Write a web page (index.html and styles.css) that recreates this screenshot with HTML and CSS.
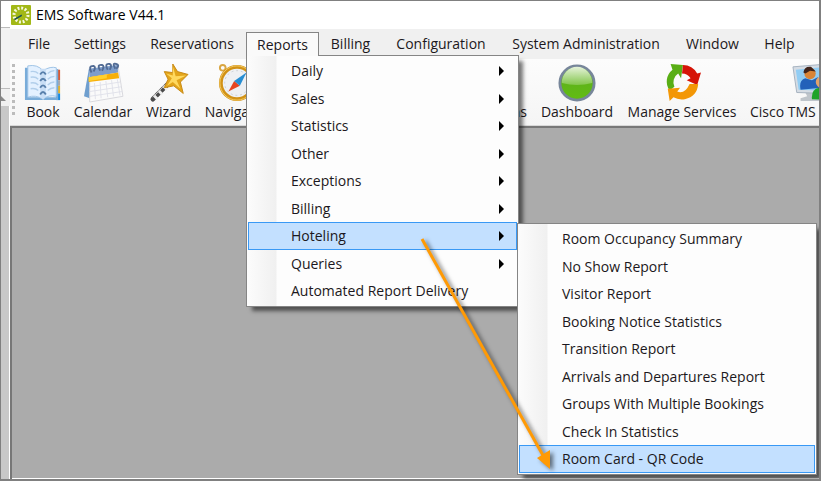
FILE: index.html
```html
<!DOCTYPE html>
<html lang="en">
<head>
<meta charset="utf-8">
<title>EMS Software V44.1</title>
<link rel="stylesheet" href="styles.css">
</head>
<body>
<div class="frame">
  <div class="behind" aria-hidden="true">
    <div class="behind-title"></div>
    <div class="behind-panel"></div>
    <div class="behind-button"><svg width="5" height="6"><path d="M0 0L5 5H0Z" fill="#888"/></svg></div>
    <div class="behind-track"></div>
  </div>
  <main class="app">
    <header class="titlebar">
      <svg class="logo" viewBox="0 0 20 20" aria-hidden="true">
        <rect width="20" height="20" rx="1" fill="#a2b817"/>
        <circle cx="10" cy="10" r="7" fill="none" stroke="#f7f9df" stroke-width="3" stroke-dasharray="1.9 1.765"/>
        <path d="M3 14L10.500 9.500L11 11L4 15Z" fill="#174d5d"/>
      </svg>
      <h1 class="title">EMS Software V44.1</h1>
    </header>
    <nav class="menubar">
      <div class="menu"><button class="menu-button">File</button></div>
      <div class="menu"><button class="menu-button">Settings</button></div>
      <div class="menu"><button class="menu-button">Reservations</button></div>
      <div class="menu menu-open">
        <button class="menu-button">Reports</button>
        <div class="dropdown">
          <button class="item has-sub">Daily</button>
          <button class="item has-sub">Sales</button>
          <button class="item has-sub">Statistics</button>
          <button class="item has-sub">Other</button>
          <button class="item has-sub">Exceptions</button>
          <button class="item has-sub">Billing</button>
          <button class="item has-sub selected">Hoteling</button>
          <button class="item has-sub">Queries</button>
          <button class="item">Automated Report Delivery</button>
          <div class="dropdown submenu">
            <button class="item">Room Occupancy Summary</button>
            <button class="item">No Show Report</button>
            <button class="item">Visitor Report</button>
            <button class="item">Booking Notice Statistics</button>
            <button class="item">Transition Report</button>
            <button class="item">Arrivals and Departures Report</button>
            <button class="item">Groups With Multiple Bookings</button>
            <button class="item">Check In Statistics</button>
            <button class="item selected">Room Card - QR Code</button>
          </div>
        </div>
      </div>
      <div class="menu"><button class="menu-button">Billing</button></div>
      <div class="menu"><button class="menu-button">Configuration</button></div>
      <div class="menu"><button class="menu-button">System Administration</button></div>
      <div class="menu"><button class="menu-button">Window</button></div>
      <div class="menu"><button class="menu-button">Help</button></div>
    </nav>
    <div class="toolbar">
      <span class="grip" aria-hidden="true"></span>
      <button class="tool">
        <svg class="tool-icon" viewBox="0 0 40 40" aria-hidden="true">
          <path d="M34 6h4v11h-4z" fill="#d85b35"/><path d="M34 17h4v6h-4z" fill="#a8a9ad"/><path d="M34 23h4v8h-4z" fill="#e7b329"/><path d="M34 31h4v7h-4z" fill="#1689df"/>
          <path d="M1 4h4v31h14l1 3H1zM20 38l2-3h12V6l2-1v33z" fill="#79acd9"/>
          <path d="M4 2Q14 0 20 7Q28 2 34 4V34Q26 32 20 37Q12 32 4 35Z" fill="#e4f1ff" stroke="#9bc1e5"/>
          <path d="M17 5h6v30l-3 2-3-2z" fill="#c9def5"/>
          <path d="M7 8q5-1 8 2M7 14q5-1 8 2M7 20q5-1 8 2M7 26q5-1 8 2M25 10q3-3 7-3M25 16q3-3 7-3M25 22q3-3 7-3M25 28q3-3 7-3" fill="none" stroke="#b2cfeb" stroke-width="1.500"/>
          <path d="M17 11q3-5 6 0M17 18q3-5 6 0M17 25q3-5 6 0M17 32q3-5 6 0" fill="none" stroke="#587fab" stroke-width="2"/>
        </svg>
        Book
      </button>
      <button class="tool">
        <svg class="tool-icon" viewBox="0 0 40 40" aria-hidden="true">
          <path d="M5 6L0 34L6 36L12 12Z" fill="#6f9fcf"/>
          <path d="M6 7L36 3L41 34L6 40Z" fill="#fafafa" stroke="#d7d7dc"/>
          <path d="M5 5L35 1L36 9L6 14Z" fill="#7d9dca"/>
          <path d="M5 14L36 9L37 15L5 19Z" fill="#f7af08"/><path d="M5 14L24 11L24 15L5 18Z" fill="#ffd12e"/>
          <path d="M11 20L12 37M17 19L18 36M23 18L25 35M29 17L31 34M35 16L38 33M6 24L38 19M6 29L39 24M6 34L40 29" stroke="#e0e2ea"/>
          <path d="M8 9Q4 2 10 2Q13 3 10 8M17 7Q13 0 19 1Q22 2 19 7M25 6Q21-1 27 0Q30 1 27 6M33 5Q29-2 34 0Q38 1 34 5" fill="none" stroke="#516b94" stroke-width="2"/>
        </svg>
        Calendar
      </button>
      <button class="tool">
        <svg class="tool-icon" viewBox="0 0 40 40" aria-hidden="true">
          <path d="M3 37L23 17" stroke="#4a4a4a" stroke-width="5" stroke-linecap="round"/>
          <path d="M4 33L8 37M9 28L13 32M14 23L18 27M18 19L22 23" stroke="#eee" stroke-width="3"/>
          <path d="M3 35L21 17" stroke="#ccc" stroke-width="1"/>
          <path d="M24 0L29 8L40 11L32 19L35 31L25 23L15 25L19 16L15 8L24 9Z" fill="#e3a51b" stroke="#c68711"/>
          <path d="M24 2L27 13L38 12L28 17L32 26L24 19L18 23L23 15L17 10L24 12Z" fill="#ffd95f"/>
        </svg>
        Wizard
      </button>
      <button class="tool">
        <svg class="tool-icon" viewBox="0 0 40 40" aria-hidden="true">
          <circle cx="5" cy="4" r="3" fill="none" stroke="#d9a642" stroke-width="2"/>
          <circle cx="20" cy="20" r="17" fill="#eef0f3" stroke="#d29216" stroke-width="4"/>
          <circle cx="20" cy="20" r="18" fill="none" stroke="#f4cc66"/>
          <circle cx="20" cy="20" r="13" fill="none" stroke="#c8cdd3" stroke-dasharray="2 3"/>
          <path d="M11 29L17 18L23 23Z" fill="#e64521"/><path d="M17 18L30 9L23 23Z" fill="#278ed3"/>
        </svg>
        Navigator
      </button>
      <button class="tool tool-right">Reservations</button>
      <button class="tool">
        <svg class="tool-icon" viewBox="0 0 40 40" aria-hidden="true">
          <defs><linearGradient id="ball" x2="0" y2="1"><stop stop-color="#5cab21"/><stop offset="1" stop-color="#62bd12"/></linearGradient><linearGradient id="shine" x2="0" y2="1"><stop stop-color="#e5f2d9"/><stop offset="1" stop-color="#83c64c"/></linearGradient></defs>
          <circle cx="20" cy="20" r="18" fill="url(#ball)" stroke="#77869a" stroke-width="3"/>
          <path d="M4 20A16 17 0 0 1 36 20Q20 24 4 20Z" fill="url(#shine)"/>
        </svg>
        Dashboard
      </button>
      <button class="tool">
        <svg class="tool-icon" viewBox="0 0 40 40" aria-hidden="true">
          <path d="M7 28A16 16 0 0 1 10 6L8 0L21 1L19 15L16 10A11 11 0 0 0 12 24Z" fill="#59ae15"/>
          <path d="M21 1Q31 1 36 10L40 9L36 22L25 17L29 15Q26 10 20 10Z" fill="#d51407"/>
          <path d="M37 21Q36 34 23 37Q16 38 11 35L7 39L5 26L18 25L15 29Q23 32 28 21Z" fill="#f39706"/>
        </svg>
        Manage Services
      </button>
      <button class="tool tool-last">
        <svg class="tool-icon" viewBox="0 0 40 40" aria-hidden="true">
          <path d="M14 30L26 30L29 35L34 39H9V36L16 34Z" fill="#bfc5cb"/>
          <path d="M1 3L37 0V31L5 30Z" fill="#d5dce4" stroke="#a4b1bf"/><path d="M4 6L35 3V28L7 27Z" fill="#91cdf4"/>
          <path d="M9 27Q7 17 14 15L21 17L27 14Q30 18 30 25Z" fill="#2361b9"/><circle cx="19" cy="10" r="6" fill="#d98537"/><path d="M12 9Q13 2 20 3L25 8L19 7L14 10Z" fill="#40241a"/>
          <circle cx="31" cy="19" r="6" fill="#e2a36c"/><path d="M21 37Q20 26 29 25Q39 24 40 38Z" fill="#20a329"/>
        </svg>
        Cisco TMS
      </button>
    </div>
    <section class="workspace"></section>
  </main>
  <svg class="pointer" width="150" height="250" viewBox="0 0 150 250" aria-hidden="true">
    <path d="M7 9L130 229" stroke="#ff9a05" stroke-width="3"/>
    <path d="M135 239L122 228L135 220Z" fill="#ff9a05"/>
  </svg>
</div>
</body>
</html>
```
FILE: styles.css
```css
* { box-sizing: border-box; }

body {
  margin: 0;
  background: #fff;
  color: #1c1820;
  font: 14px/20px "Open Sans", "Noto Sans", sans-serif;
}

button {
  border: 0;
  padding: 0;
  background: none;
  color: inherit;
  font: inherit;
  white-space: nowrap;
}

.frame {
  position: relative;
  display: flex;
  min-height: 100vh;
  margin-right: 9px;
  overflow: hidden;
  border: solid #808080;
  border-width: 1px 2px 2px 1px;
}

.behind {
  display: flex;
  flex: none;
  flex-direction: column;
  width: 9px;
}

.behind-title { height: 26px; }
.behind-panel { height: 62px; border: solid #bbb; border-width: 1px 0; background: #f3f3f3; }
.behind-button { height: 17px; padding-top: 7px; background: #f0f0f0; line-height: 0; }
.behind-track { flex: 1; border-right: 1px solid #fff; background: #c8c8c8; }

.app {
  display: flex;
  flex: 1;
  flex-direction: column;
  min-width: 0;
}

.titlebar {
  display: flex;
  align-items: center;
  gap: 5px;
  height: 28px;
  padding-left: 1px;
}

.logo { width: 20px; height: 20px; }
.title { margin: 0; color: #000; font-size: 14px; font-weight: 400; }

.menubar {
  display: grid;
  grid-template-columns: 46px 76px 108px 73px 63px 118px 172px 81px 53px;
  height: 30px;
  padding: 3px 0 0 6px;
  background: #f0f0f0;
}

.menu { position: relative; }
.menu-button { width: 100%; height: 24px; }

.menu-open .menu-button {
  position: relative;
  z-index: 3;
  border: 1px solid #858585;
  border-bottom: 0;
  background: #fafafa;
}

.dropdown {
  position: absolute;
  z-index: 2;
  top: 23px;
  left: 0;
  display: flex;
  flex-direction: column;
  width: 273px;
  padding: 1px;
  border: 1px solid #858585;
  background: linear-gradient(90deg, #fcfcfc 0, #f0f0f0 29px, #fdfdfd 30px);
  box-shadow: 5px 5px 4px -1px #0008;
}

.dropdown .item {
  display: flex;
  align-items: center;
  justify-content: space-between;
  height: 28px;
  padding: 0 12px 0 42px;
  border: 1px solid transparent;
}

.dropdown .item:nth-child(even) { height: 27px; }
.dropdown .selected { border-color: #3999f5; background: #c3e0ff; }

.has-sub::after {
  border: solid transparent;
  border-width: 5px 0 5px 5px;
  border-left-color: #000;
  content: "";
}

.submenu {
  top: 167px;
  left: 270px;
  width: 300px;
}

.toolbar {
  display: grid;
  grid-template-columns: 10px 46px 74px 57px 79px 257px 88px 122px 76px;
  flex: none;
  height: 67px;
  overflow: hidden;
  background: linear-gradient(#fcfcfc, #f5f5f5);
  border-bottom: 1px solid #d8d8d8;
}

.grip {
  width: 3px;
  margin: 5px 0 8px 2px;
  background: repeating-linear-gradient(#bcbcbc 0 3px, transparent 3px 6px);
}

.tool {
  display: flex;
  flex-direction: column;
  align-items: center;
  justify-content: flex-end;
  padding-bottom: 3px;
}

.tool-icon { width: 38px; height: 38px; overflow: visible; }
.tool-right { align-items: flex-end; padding-right: 6px; }
.tool-last { align-items: flex-start; padding-left: 7px; }
.tool-last .tool-icon { margin-left: 42px; }

.workspace {
  flex: 1;
  border: solid #777;
  border-width: 2px 0 0 2px;
  background: #ababab;
  box-shadow: inset 0 -1px #fff;
}

.pointer {
  position: absolute;
  z-index: 4;
  top: 229px;
  left: 414px;
  filter: drop-shadow(3px 2px 2px #0008);
}
```
